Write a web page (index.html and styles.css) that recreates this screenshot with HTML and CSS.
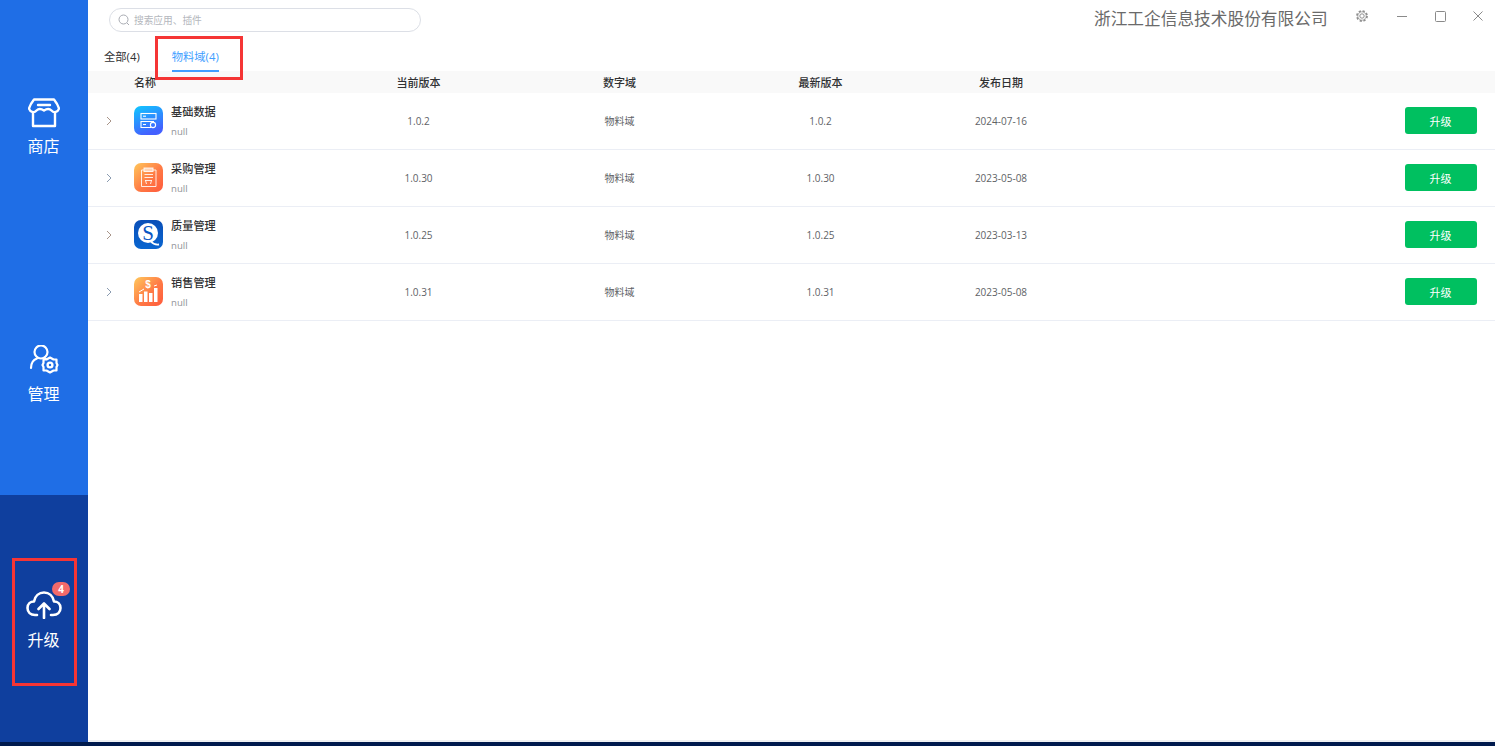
FILE: index.html
```html
<!DOCTYPE html>
<html lang="zh-CN">
<head>
<meta charset="utf-8">
<title>升级</title>
<link rel="stylesheet" href="styles.css">
</head>
<body>
<div class="app">
  <div class="window">
    <aside class="sidebar">
      <a class="nav-item nav-item-first">
        <svg class="nav-icon" viewBox="0 0 32 30" fill="none" stroke="#fff" stroke-width="2.400" stroke-linejoin="round" stroke-linecap="round">
          <path d="M5 15V28H27V15"/>
          <path d="M6 1.500H26C28 4 30 7 31 10.500C30 14 26 15.500 23.500 12.500C21.500 10.500 19 10.500 16 12.500C13 10.500 10.500 10.500 8.500 12.500C6 15.500 2 14 1 10.500C2 7 4 4 6 1.500Z"/>
          <path d="M10 7H22"/>
        </svg>
        <span class="nav-label">商店</span>
      </a>
      <a class="nav-item">
        <svg class="nav-icon" viewBox="0 0 32 30" fill="none" stroke="#fff" stroke-width="2.200" stroke-linecap="round" stroke-linejoin="round">
          <circle cx="13" cy="7" r="6.500"/>
          <path d="M3 23C3 18.500 5 15 9 13.500M17 13.500L18 14"/>
          <path d="M22 12.500L25.500 14.500L28.500 14.500L28.500 18L29.500 20L28.500 22L28.500 25.500L25.500 25.500L22 27.500L18.500 25.500L15.500 25.500L15.500 22L14.500 20L15.500 18L15.500 14.500L18.500 14.500Z" stroke-width="2.200"/>
          <circle cx="22" cy="20" r="2.400" stroke-width="2.400"/>
        </svg>
        <span class="nav-label">管理</span>
      </a>
      <a class="nav-item nav-item-active">
        <svg class="nav-icon nav-icon-wide" viewBox="0 0 36 30" fill="none" stroke="#fff" stroke-width="2.600" stroke-linecap="round" stroke-linejoin="round">
          <path d="M11 26H9C4.500 26 1.500 23 1.500 19C1.500 15 4.500 12.500 8 12.500C9 7 13 3.500 18 3.500C23 3.500 27 7 28 12.500C31.500 12.500 34.500 15 34.500 19C34.500 23 31.500 26 27 26H25"/>
          <path d="M18 29V15M12.500 20L18 14.500L23.500 20"/>
        </svg>
        <span class="nav-label">升级</span>
        <span class="badge">4</span>
      </a>
      <span class="mark mark-upgrade"></span>
    </aside>

    <main class="main">
      <header class="topbar">
        <div class="search">
          <svg class="search-icon" viewBox="0 0 12 12" fill="none" stroke="#a8abb2" stroke-width="1">
            <circle cx="5.500" cy="5.500" r="4.500"/>
            <path d="M9 9L11 11"/>
          </svg>
          <span class="search-text">搜索应用、插件</span>
        </div>
        <span class="company">浙江工企信息技术股份有限公司</span>
        <div class="win-controls">
          <svg class="win-icon win-icon-gear" viewBox="0 0 14 14" fill="none" stroke="#8f8f8f">
            <circle cx="7" cy="7" r="5" stroke-width="1.800" stroke-dasharray="2.200 1.727"/>
            <circle cx="7" cy="7" r="4.200" stroke-width="0.700"/>
            <circle cx="7" cy="7" r="2.200" stroke-width="1"/>
          </svg>
          <svg class="win-icon" viewBox="0 0 14 14" fill="none" stroke="#8a8a8a" stroke-width="1">
            <path d="M2 7.500H12"/>
          </svg>
          <svg class="win-icon" viewBox="0 0 14 14" fill="none" stroke="#8a8a8a" stroke-width="1">
            <rect x="2.500" y="2.500" width="10" height="10" rx="1"/>
          </svg>
          <svg class="win-icon" viewBox="0 0 14 14" fill="none" stroke="#8a8a8a" stroke-width="1">
            <path d="M2.500 2.500L11.500 11.500M11.500 2.500L2.500 11.500"/>
          </svg>
        </div>
      </header>

      <nav class="tabs">
        <span class="tab">全部(4)</span>
        <span class="tab tab-active">物料域(4)</span>
        <span class="mark mark-tab"></span>
      </nav>

      <section class="table">
        <div class="row row-head">
          <span></span>
          <span class="cell-name-head">名称</span>
          <span class="cell">当前版本</span>
          <span class="cell">数字域</span>
          <span class="cell">最新版本</span>
          <span class="cell">发布日期</span>
          <span></span>
          <span></span>
        </div>

        <div class="row">
          <svg class="chev" viewBox="0 0 8 10" fill="none" stroke="#a89488" stroke-width="1"><path d="M2 1L6 5L2 9"/></svg>
          <div class="app-name">
            <svg class="app-icon" viewBox="0 0 29 29">
              <defs>
                <linearGradient id="g1" x1="0" y1="0" x2="0.4" y2="1"><stop offset="0" stop-color="#10c8ff"/><stop offset="1" stop-color="#4360ff"/></linearGradient>
              </defs>
              <rect width="29" height="29" rx="7" fill="url(#g1)"/>
              <g fill="none" stroke="#fff" stroke-width="1.100">
                <rect x="7" y="7.500" width="15" height="5.500"/>
                <path d="M9 10.200H12"/>
                <path d="M20 15.500H7V21.500H17"/>
                <path d="M9 18.500H12"/>
                <circle cx="19" cy="19" r="2.600"/>
              </g>
            </svg>
            <div class="app-text"><span class="app-title">基础数据</span><span class="app-sub">null</span></div>
          </div>
          <span class="cell">1.0.2</span>
          <span class="cell cell-zh">物料域</span>
          <span class="cell">1.0.2</span>
          <span class="cell">2024-07-16</span>
          <span></span>
          <button class="btn">升级</button>
        </div>

        <div class="row">
          <svg class="chev" viewBox="0 0 8 10" fill="none" stroke="#8a9bb0" stroke-width="1"><path d="M2 1L6 5L2 9"/></svg>
          <div class="app-name">
            <svg class="app-icon" viewBox="0 0 29 29">
              <defs>
                <linearGradient id="g2" x1="0" y1="0" x2="1" y2="1"><stop offset="0" stop-color="#ffc75a"/><stop offset="0.550" stop-color="#ff7a45"/><stop offset="1" stop-color="#ff5a3c"/></linearGradient>
              </defs>
              <rect width="29" height="29" rx="7" fill="url(#g2)"/>
              <g fill="none" stroke="#fff" stroke-opacity="0.850" stroke-width="1">
                <path d="M10 7H7.500V23.500H22V7H19"/>
                <rect x="10" y="5" width="9" height="3.500" fill="#fff" fill-opacity="0.600"/>
                <path d="M10.500 11.500H19M10.500 14.500H19M11 17.500H18M11.500 17.500L12.500 21M17.500 17.500L16.500 21"/>
              </g>
            </svg>
            <div class="app-text"><span class="app-title">采购管理</span><span class="app-sub">null</span></div>
          </div>
          <span class="cell">1.0.30</span>
          <span class="cell cell-zh">物料域</span>
          <span class="cell">1.0.30</span>
          <span class="cell">2023-05-08</span>
          <span></span>
          <button class="btn">升级</button>
        </div>

        <div class="row">
          <svg class="chev" viewBox="0 0 8 10" fill="none" stroke="#a89488" stroke-width="1"><path d="M2 1L6 5L2 9"/></svg>
          <div class="app-name">
            <svg class="app-icon" viewBox="0 0 29 29">
              <defs>
                <linearGradient id="g3" x1="0" y1="0" x2="0" y2="1"><stop offset="0" stop-color="#0a4fb8"/><stop offset="1" stop-color="#0a66d0"/></linearGradient>
              </defs>
              <rect width="29" height="29" rx="7" fill="url(#g3)"/>
              <circle cx="14" cy="13" r="10" fill="#fff"/>
              <path d="M17 21.500C19 24 21 25 25 24.500" stroke="#fff" stroke-width="1.800" fill="none"/>
              <text class="logo-letter" x="14" y="20" text-anchor="middle">S</text>
            </svg>
            <div class="app-text"><span class="app-title">质量管理</span><span class="app-sub">null</span></div>
          </div>
          <span class="cell">1.0.25</span>
          <span class="cell cell-zh">物料域</span>
          <span class="cell">1.0.25</span>
          <span class="cell">2023-03-13</span>
          <span></span>
          <button class="btn">升级</button>
        </div>

        <div class="row">
          <svg class="chev" viewBox="0 0 8 10" fill="none" stroke="#8a9bb0" stroke-width="1"><path d="M2 1L6 5L2 9"/></svg>
          <div class="app-name">
            <svg class="app-icon" viewBox="0 0 29 29">
              <defs>
                <linearGradient id="g4" x1="0" y1="0" x2="1" y2="1"><stop offset="0" stop-color="#ffc95c"/><stop offset="0.550" stop-color="#ff7a45"/><stop offset="1" stop-color="#ff5a3c"/></linearGradient>
              </defs>
              <rect width="29" height="29" rx="7" fill="url(#g4)"/>
              <g fill="#fff">
                <rect x="5" y="17" width="3.500" height="8"/>
                <rect x="10" y="14.500" width="3.500" height="10.500"/>
                <rect x="15" y="16" width="3.500" height="9"/>
                <rect x="20" y="11" width="3.500" height="14"/>
              </g>
              <path d="M5 15L10 12M20 9L23 8" stroke="#fff" stroke-width="1" fill="none"/>
              <text class="logo-dollar" x="14" y="11" text-anchor="middle">$</text>
            </svg>
            <div class="app-text"><span class="app-title">销售管理</span><span class="app-sub">null</span></div>
          </div>
          <span class="cell">1.0.31</span>
          <span class="cell cell-zh">物料域</span>
          <span class="cell">1.0.31</span>
          <span class="cell">2023-05-08</span>
          <span></span>
          <button class="btn">升级</button>
        </div>
      </section>
    </main>
  </div>
</div>
</body>
</html>
```

FILE: styles.css
```css
* {
  box-sizing: border-box;
}

html,
body {
  margin: 0;
  height: 100%;
  overflow: hidden;
}

body {
  font-family: "Open Sans", "Noto Sans CJK SC", sans-serif;
  font-size: 11px;
  color: #303133;
  background: #001a4d;
}

.app {
  height: 746px;
  padding-bottom: 4px;
  background: #001a4d;
}

.window {
  display: flex;
  height: 742px;
}

/* Sidebar */
.sidebar {
  position: relative;
  display: flex;
  flex-direction: column;
  flex: 0 0 88px;
  background: #1f6ee6;
}

.nav-item {
  position: relative;
  flex: 0 0 247px;
  display: flex;
  flex-direction: column;
  align-items: center;
  justify-content: center;
  padding-top: 8px;
  padding-right: 1px;
  gap: 7px;
  color: #fff;
}

.nav-item-first {
  flex-basis: 248px;
  gap: 6px;
}

.nav-item-active {
  padding-top: 4px;
  gap: 9px;
  background: #0f3f9e;
}

.nav-icon {
  display: block;
  width: 32px;
  height: 30px;
}

.nav-icon-wide {
  width: 36px;
}

.nav-label {
  font-size: 16px;
  line-height: 24px;
}

.badge {
  position: absolute;
  left: 52px;
  top: 87px;
  width: 18px;
  height: 14px;
  border-radius: 7px;
  background: #f26a6a;
  color: #fff;
  font-size: 10px;
  font-weight: 700;
  line-height: 14px;
  text-align: center;
}

.mark {
  position: absolute;
  border: 3px solid #f53535;
  pointer-events: none;
}

.mark-upgrade {
  left: 12px;
  top: 558px;
  width: 65px;
  height: 128px;
}

.mark-tab {
  left: 67px;
  top: 0;
  width: 88px;
  height: 44px;
}

/* Main */
.main {
  flex: 1 1 auto;
  min-width: 0;
  display: flex;
  flex-direction: column;
  background: #fff;
  border-bottom: 2px solid #eef0f3;
}

.topbar {
  display: flex;
  align-items: flex-start;
  height: 36px;
  padding: 8px 0 0 21px;
}

.search {
  display: flex;
  align-items: center;
  gap: 4px;
  width: 312px;
  height: 24px;
  padding-left: 8px;
  border: 1px solid #dcdfe6;
  border-radius: 12px;
}

.search-icon {
  width: 12px;
  height: 12px;
}

.search-text {
  padding-top: 1px;
  color: #b4b7bd;
  font-size: 9.7px;
  line-height: 14px;
}

.company {
  margin-left: 673px;
  color: #6a6a6a;
  font-size: 16.7px;
  line-height: 22px;
}

.win-controls {
  display: flex;
  gap: 24px;
  margin-left: 27px;
  margin-top: 1px;
}

.win-icon {
  display: block;
  width: 14px;
  height: 14px;
}

.win-icon-gear {
  margin-right: 2px;
}

.tabs {
  position: relative;
  display: flex;
  height: 35px;
  padding-left: 16px;
  gap: 32px;
}

.tab {
  height: 36px;
  padding-top: 12px;
  font-size: 11.3px;
  line-height: 18px;
  color: #303133;
}

.tab-active {
  position: relative;
  color: #409eff;
  border-bottom: 2px solid #409eff;
}

/* Table */
.row {
  display: grid;
  grid-template-columns: 46px 184px 201px 201px 201px 160px 1fr 72px;
  align-items: center;
  height: 57px;
  padding-right: 18px;
  border-bottom: 1px solid #ebeef5;
  color: #606266;
  font-size: 10px;
}

.row-head {
  height: 22px;
  border-bottom: 0;
  background: #f9f9f9;
  color: #303133;
  font-size: 11px;
  font-weight: 500;
}

.cell {
  text-align: center;
}

.cell-zh {
  padding-bottom: 2px;
}

.chev {
  display: block;
  width: 8px;
  height: 10px;
  margin-left: 17px;
}

.app-name {
  display: flex;
  align-items: center;
  gap: 8px;
  margin-bottom: 2px;
}

.app-icon {
  display: block;
  flex: 0 0 29px;
  width: 29px;
  height: 29px;
}

.logo-letter {
  font-family: "Liberation Serif", serif;
  font-size: 21px;
  fill: #0a56c4;
}

.logo-dollar {
  font-family: "Liberation Sans", sans-serif;
  font-size: 10px;
  font-weight: 700;
  fill: #fff;
}

.app-text {
  display: flex;
  flex-direction: column;
  gap: 5px;
  padding-top: 2px;
}

.app-title {
  color: #303133;
  font-size: 11.2px;
  font-weight: 500;
  line-height: 16px;
}

.app-sub {
  color: #909399;
  font-size: 9.6px;
  line-height: 14px;
}

.btn {
  width: 72px;
  height: 27px;
  margin-bottom: 1px;
  padding: 0 1px 0 0;
  border: 0;
  border-radius: 3px;
  background: #00c060;
  color: #fff;
  font-family: inherit;
  font-size: 11px;
}
```
